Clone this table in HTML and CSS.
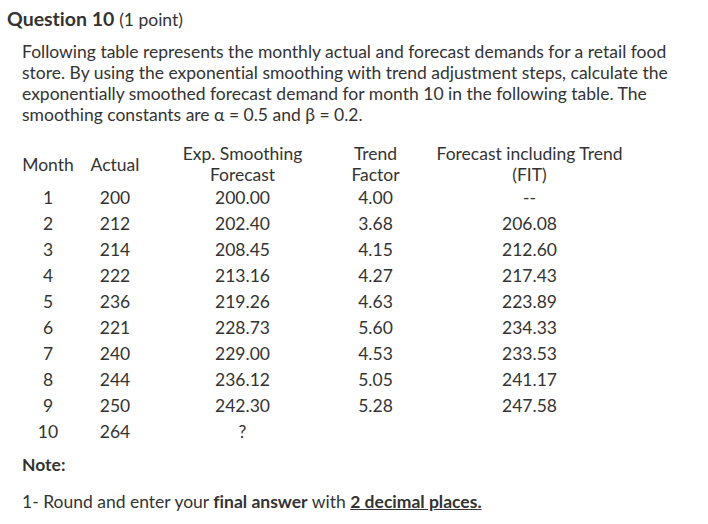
FILE: index.html
```html
<!DOCTYPE html>
<html>
<head>
<meta charset="utf-8">
<link rel="stylesheet" href="styles.css">
</head>
<body>
<div class="page">
  <h2 class="qtitle">Question 10 <span class="pts">(1 point)</span></h2>
  <div class="qbody">
    <p class="intro">Following table represents the monthly actual and forecast demands for a retail food store. By using the exponential smoothing with trend adjustment steps, calculate the exponentially smoothed forecast demand for month 10 in the following table. The smoothing constants are α = 0.5 and β = 0.2.</p>
    <table class="data">
      <thead>
        <tr><th class="c-month">Month</th><th class="c-act">Actual</th><th class="c-exp">Exp. Smoothing<br>Forecast</th><th class="c-tr">Trend<br>Factor</th><th class="c-fit">Forecast including Trend<br>(FIT)</th></tr>
      </thead>
      <tbody>
        <tr><td>1</td><td>200</td><td>200.00</td><td>4.00</td><td>--</td></tr>
        <tr><td>2</td><td>212</td><td>202.40</td><td>3.68</td><td>206.08</td></tr>
        <tr><td>3</td><td>214</td><td>208.45</td><td>4.15</td><td>212.60</td></tr>
        <tr><td>4</td><td>222</td><td>213.16</td><td>4.27</td><td>217.43</td></tr>
        <tr><td>5</td><td>236</td><td>219.26</td><td>4.63</td><td>223.89</td></tr>
        <tr><td>6</td><td>221</td><td>228.73</td><td>5.60</td><td>234.33</td></tr>
        <tr><td>7</td><td>240</td><td>229.00</td><td>4.53</td><td>233.53</td></tr>
        <tr><td>8</td><td>244</td><td>236.12</td><td>5.05</td><td>241.17</td></tr>
        <tr><td>9</td><td>250</td><td>242.30</td><td>5.28</td><td>247.58</td></tr>
        <tr><td>10</td><td>264</td><td>?</td><td></td><td></td></tr>
      </tbody>
    </table>
    <p class="note">Note:</p>
    <p class="rule">1- Round and enter your <b>final answer</b> with <b class="u">2 decimal places.</b></p>
  </div>
</div>
</body>
</html>
```
FILE: styles.css
```css
html, body { margin: 0; padding: 0; background: #fff; }
body { font-family: Lato, "Noto Sans", sans-serif; color: #333; font-variant-ligatures: none; }
.page { padding: 7px 0 0 7px; }
.qtitle { margin: 0; font-size: 19.5px; font-weight: 700; line-height: 24px; }
.qtitle .pts { font-weight: 400; font-size: 17.5px; }
.qbody { padding: 9px 0 0 15px; font-size: 17.5px; line-height: 21px; }
.intro { margin: 0; width: 676px; }
.data { border-collapse: collapse; margin-top: 18px; }
.data th { font-weight: 400; line-height: 21px; padding: 0; text-align: center; vertical-align: middle; }
.data td { padding: 0; height: 26px; text-align: center; line-height: 26px; }
.c-month { width: 52px; }
.c-act { width: 82px; }
.c-exp { width: 173px; }
.c-tr { width: 93px; }
.c-fit { width: 215px; }
.note { margin: 9px 0 0; font-weight: 700; }
.rule { margin: 16px 0 0; }
.u { text-decoration: underline; }
```
